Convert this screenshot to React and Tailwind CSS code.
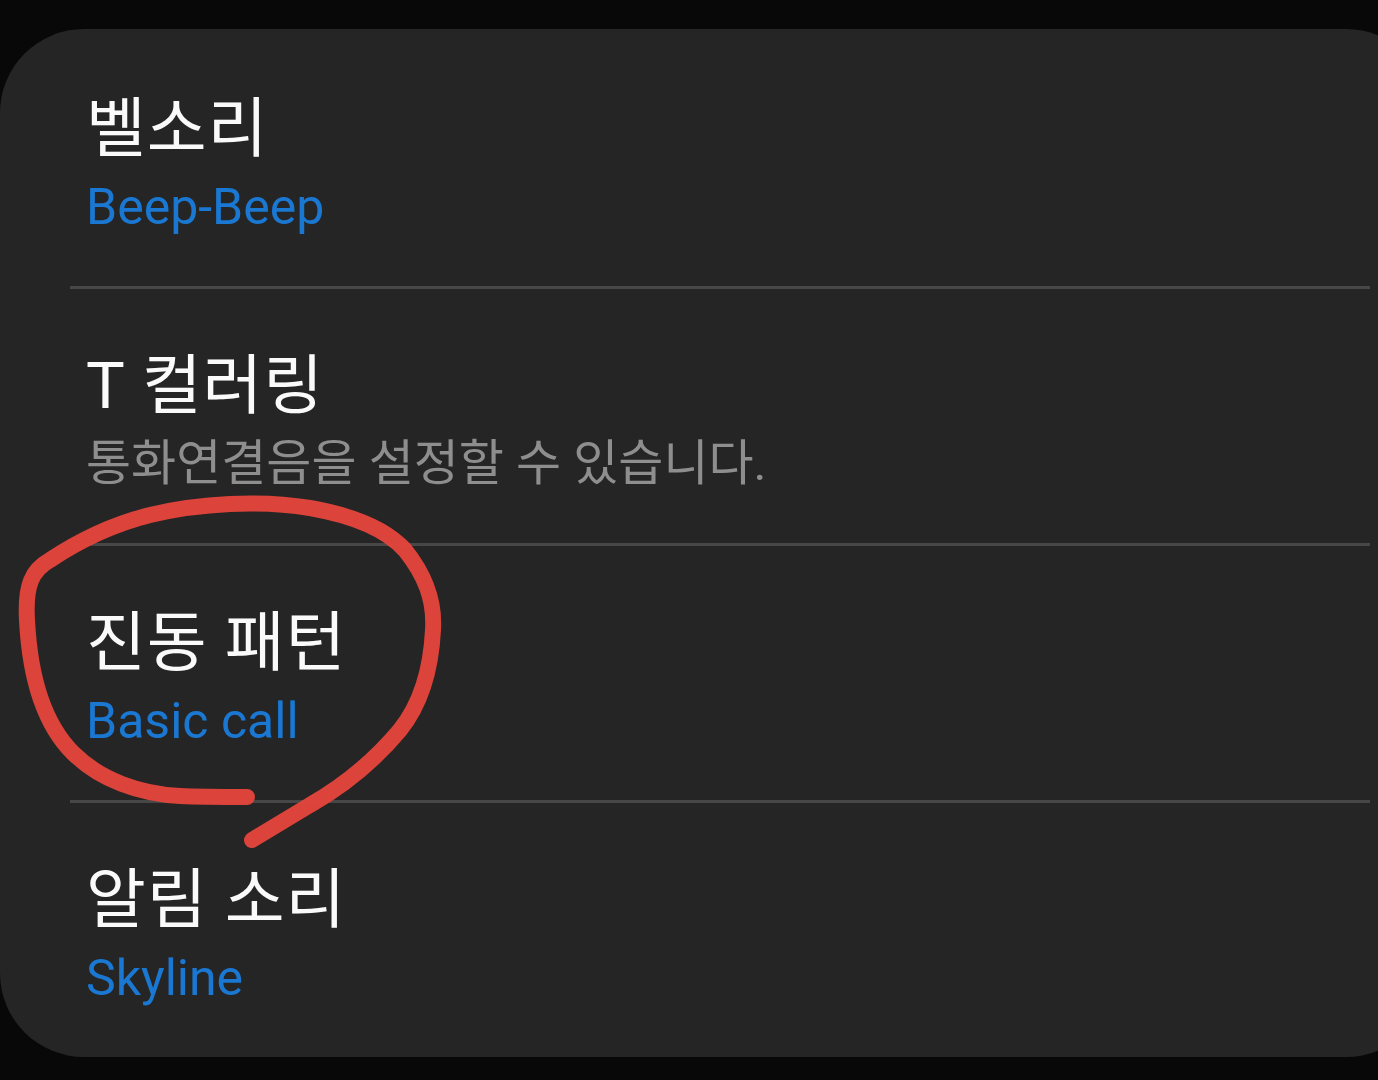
const ROWS = [
  { title: '벨소리', sub: 'Beep-Beep', tone: 'blue' },
  { title: 'T 컬러링', sub: '통화연결음을 설정할 수 있습니다.', tone: 'gray' },
  { title: '진동 패턴', sub: 'Basic call', tone: 'blue' },
  { title: '알림 소리', sub: 'Skyline', tone: 'blue' },
]

const FONT = 'font-["Roboto","Noto_Sans_CJK_KR",sans-serif]'

function Row({ title, sub, tone, first }) {
  return (
    <div className={first ? 'h-[257px] pl-[86px] pt-[58px] flex flex-col' : 'h-[254px] pl-[86px] pt-[55px] flex flex-col'}>
      <div className="text-[65px] leading-[84px] text-[#fafafa] tracking-[1px]">{title}</div>
      <div
        className={
          tone === 'blue'
            ? 'text-[50px] leading-[72px] text-[#1a78d2]'
            : 'text-[49px] leading-[72px] text-[#8e8e8e]'
        }
      >
        {sub}
      </div>
    </div>
  )
}

export default function App() {
  return (
    <div className={`relative h-[1080px] w-[1378px] overflow-hidden bg-[#080808] pt-[29px] ${FONT}`}>
      <div className="w-[1430px] h-[1028px] rounded-[84px] bg-[#252525] flex flex-col">
        {ROWS.map((r, i) => (
          <div key={r.title}>
            {i > 0 && <div className="h-[3px] ml-[70px] mr-[60px] bg-[#474747]" />}
            <Row {...r} first={i === 0} />
          </div>
        ))}
      </div>

      {/* hand-drawn red marker circle around the vibration row */}
      <svg className="absolute left-0 top-0 pointer-events-none" width="1378" height="1080">
        <path
          d="M247 797 C225 797 200 797 180 796 C140 794 100 780 73 753 C45 725 30 680 27 620 C25 585 32 570 50 560 C80 540 110 525 150 515 C200 503 260 500 310 508 C350 515 385 528 405 550 C425 575 435 600 433 630 C431 670 420 705 400 730 C375 760 345 785 310 805 C285 820 265 832 252 840"
          fill="none"
          stroke="#e6453b"
          strokeWidth="16"
          strokeLinecap="round"
          strokeLinejoin="round"
          opacity="0.95"
        />
      </svg>
    </div>
  )
}
